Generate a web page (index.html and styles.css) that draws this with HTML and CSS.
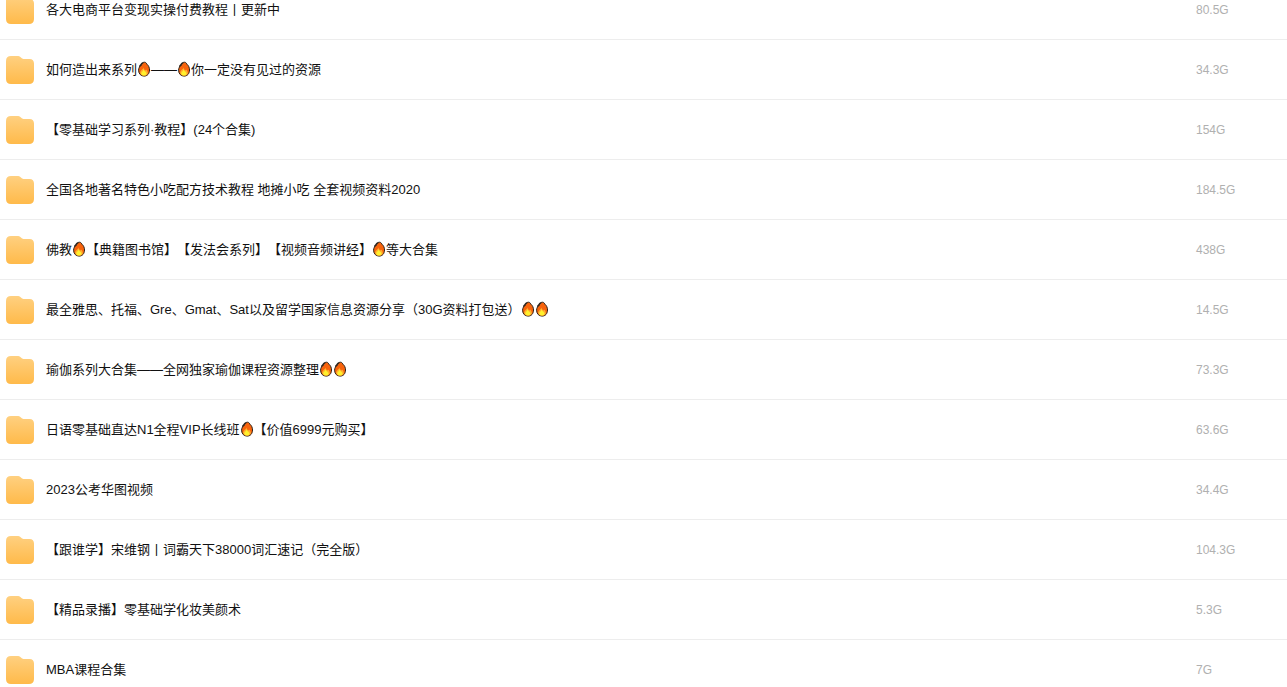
FILE: index.html
```html
<!DOCTYPE html>
<html lang="zh-CN">
<head>
    <meta charset="UTF-8">
    <meta name="viewport" content="width=device-width, initial-scale=1.0">
    <title>文件列表</title>
    <link rel="stylesheet" href="styles.css">
</head>
<body>
    <svg class="sprite" aria-hidden="true">
        <defs>
            <linearGradient id="folderFill" x1="0" y1="0" x2="0" y2="1">
                <stop offset="0" stop-color="#ffd080"/>
                <stop offset="1" stop-color="#ffba4a"/>
            </linearGradient>
        </defs>
        <symbol id="folder" viewBox="0 0 28 28">
            <path fill="url(#folderFill)" d="M5 0H11.500C12.700 0 13.500.3 14.400 1.100L15.800 2.300C16.500 2.900 17 3 18 3H23.500C26.500 3 28 4.800 28 7.500V23C28 26.200 26.200 28 23 28H5C1.800 28 0 26.200 0 23V5C0 1.800 1.800 0 5 0Z"/>
        </symbol>
        <symbol id="fire" viewBox="0 0 14 16">
            <path fill="#f7630c" stroke="#2b2118" stroke-width="1" stroke-linejoin="round" d="M6.400 1.300C8.200 .9 9.300 1.600 9.900 3.200C11.600 4.500 12.500 6.600 12.500 9C12.500 12.700 10.300 15.100 7.100 15.100C3.900 15.100 1.600 12.700 1.600 9.200C1.600 7 2.600 5.700 3.900 4.500C5 3.500 6 2.600 6.400 1.300Z"/>
            <path fill="#2b2118" d="M2.200 7V4.500L3.400 3.200C4 2.200 5 1.100 6.500 .9C5.600 3.200 3.600 4.600 2.200 7Z"/>
            <path fill="#ffb02e" d="M6.500 6.400C6.600 7.800 7.500 8.600 8.500 9.400L9 8.500C10.200 9.600 10.900 10.700 10.800 11.900C10.500 13.800 9 14.600 7.100 14.600C5 14.600 3.400 13.600 3.200 11.700C3.100 9.300 5.900 8.700 6.500 6.400Z"/>
            <path fill="#fff12d" d="M6.600 8.600C7 9.700 8 10.400 8.600 11C9.300 11.500 9.700 12.200 9.500 13C9 14.200 8.200 14.600 7 14.600C5.600 14.600 4.500 14 4.300 12.800C4.100 11 6.100 10.500 6.600 8.600Z"/>
        </symbol>
    </svg>

    <table class="file-list">
        <tbody>
            <tr>
                <td class="icon"><svg class="folder"><use href="#folder"/></svg></td>
                <td class="name"><a href="#">各大电商平台变现实操付费教程丨更新中</a></td>
                <td class="size">80.5G</td>
            </tr>
            <tr>
                <td class="icon"><svg class="folder"><use href="#folder"/></svg></td>
                <td class="name"><a href="#">如何造出来系列<svg class="fire"><use href="#fire"/></svg>——<svg class="fire"><use href="#fire"/></svg>你一定没有见过的资源</a></td>
                <td class="size">34.3G</td>
            </tr>
            <tr>
                <td class="icon"><svg class="folder"><use href="#folder"/></svg></td>
                <td class="name"><a href="#">【零基础学习系列·教程】(24个合集)</a></td>
                <td class="size">154G</td>
            </tr>
            <tr>
                <td class="icon"><svg class="folder"><use href="#folder"/></svg></td>
                <td class="name"><a href="#">全国各地著名特色小吃配方技术教程 地摊小吃 全套视频资料2020</a></td>
                <td class="size">184.5G</td>
            </tr>
            <tr>
                <td class="icon"><svg class="folder"><use href="#folder"/></svg></td>
                <td class="name"><a href="#">佛教<svg class="fire"><use href="#fire"/></svg>【典籍图书馆】【发法会系列】【视频音频讲经】<svg class="fire"><use href="#fire"/></svg>等大合集</a></td>
                <td class="size">438G</td>
            </tr>
            <tr>
                <td class="icon"><svg class="folder"><use href="#folder"/></svg></td>
                <td class="name"><a href="#">最全雅思、托福、Gre、Gmat、Sat以及留学国家信息资源分享（30G资料打包送）<svg class="fire"><use href="#fire"/></svg><svg class="fire"><use href="#fire"/></svg></a></td>
                <td class="size">14.5G</td>
            </tr>
            <tr>
                <td class="icon"><svg class="folder"><use href="#folder"/></svg></td>
                <td class="name"><a href="#">瑜伽系列大合集——全网独家瑜伽课程资源整理<svg class="fire"><use href="#fire"/></svg><svg class="fire"><use href="#fire"/></svg></a></td>
                <td class="size">73.3G</td>
            </tr>
            <tr>
                <td class="icon"><svg class="folder"><use href="#folder"/></svg></td>
                <td class="name"><a href="#">日语零基础直达N1全程VIP长线班<svg class="fire"><use href="#fire"/></svg>【价值6999元购买】</a></td>
                <td class="size">63.6G</td>
            </tr>
            <tr>
                <td class="icon"><svg class="folder"><use href="#folder"/></svg></td>
                <td class="name"><a href="#">2023公考华图视频</a></td>
                <td class="size">34.4G</td>
            </tr>
            <tr>
                <td class="icon"><svg class="folder"><use href="#folder"/></svg></td>
                <td class="name"><a href="#">【跟谁学】宋维钢丨词霸天下38000词汇速记（完全版）</a></td>
                <td class="size">104.3G</td>
            </tr>
            <tr>
                <td class="icon"><svg class="folder"><use href="#folder"/></svg></td>
                <td class="name"><a href="#">【精品录播】零基础学化妆美颜术</a></td>
                <td class="size">5.3G</td>
            </tr>
            <tr>
                <td class="icon"><svg class="folder"><use href="#folder"/></svg></td>
                <td class="name"><a href="#">MBA课程合集</a></td>
                <td class="size">7G</td>
            </tr>
        </tbody>
    </table>
</body>
</html>
```

FILE: styles.css
```css
html, body {
    height: 100%;
}
body {
    margin: 0;
    overflow: hidden;
    background: #fff;
    color: #111;
    font-family: "Liberation Sans", Arial, "Noto Sans CJK SC", sans-serif;
    font-size: 13px;
    line-height: 20px;
    text-spacing-trim: space-all;
}
.sprite {
    position: absolute;
    width: 0;
    height: 0;
}
/* list is scrolled a little past its first row */
.file-list {
    width: 100%;
    margin-top: -20px;
    border-collapse: separate;
    border-spacing: 0;
    table-layout: fixed;
}
.file-list td {
    height: 59px;
    padding: 0;
    border-bottom: 1px solid #ededed;
    vertical-align: middle;
}
.file-list .icon {
    width: 40px;
    padding-left: 6px;
}
.file-list .size {
    width: 91px;
    color: #b0b0b0;
    font-size: 12px;
}
.name a {
    color: inherit;
    text-decoration: none;
    white-space: nowrap;
}
.name a:hover {
    color: #ffa31a;
}
.folder {
    display: block;
    width: 28px;
    height: 28px;
}
.fire {
    width: 14px;
    height: 16px;
    vertical-align: -3px;
}
```
